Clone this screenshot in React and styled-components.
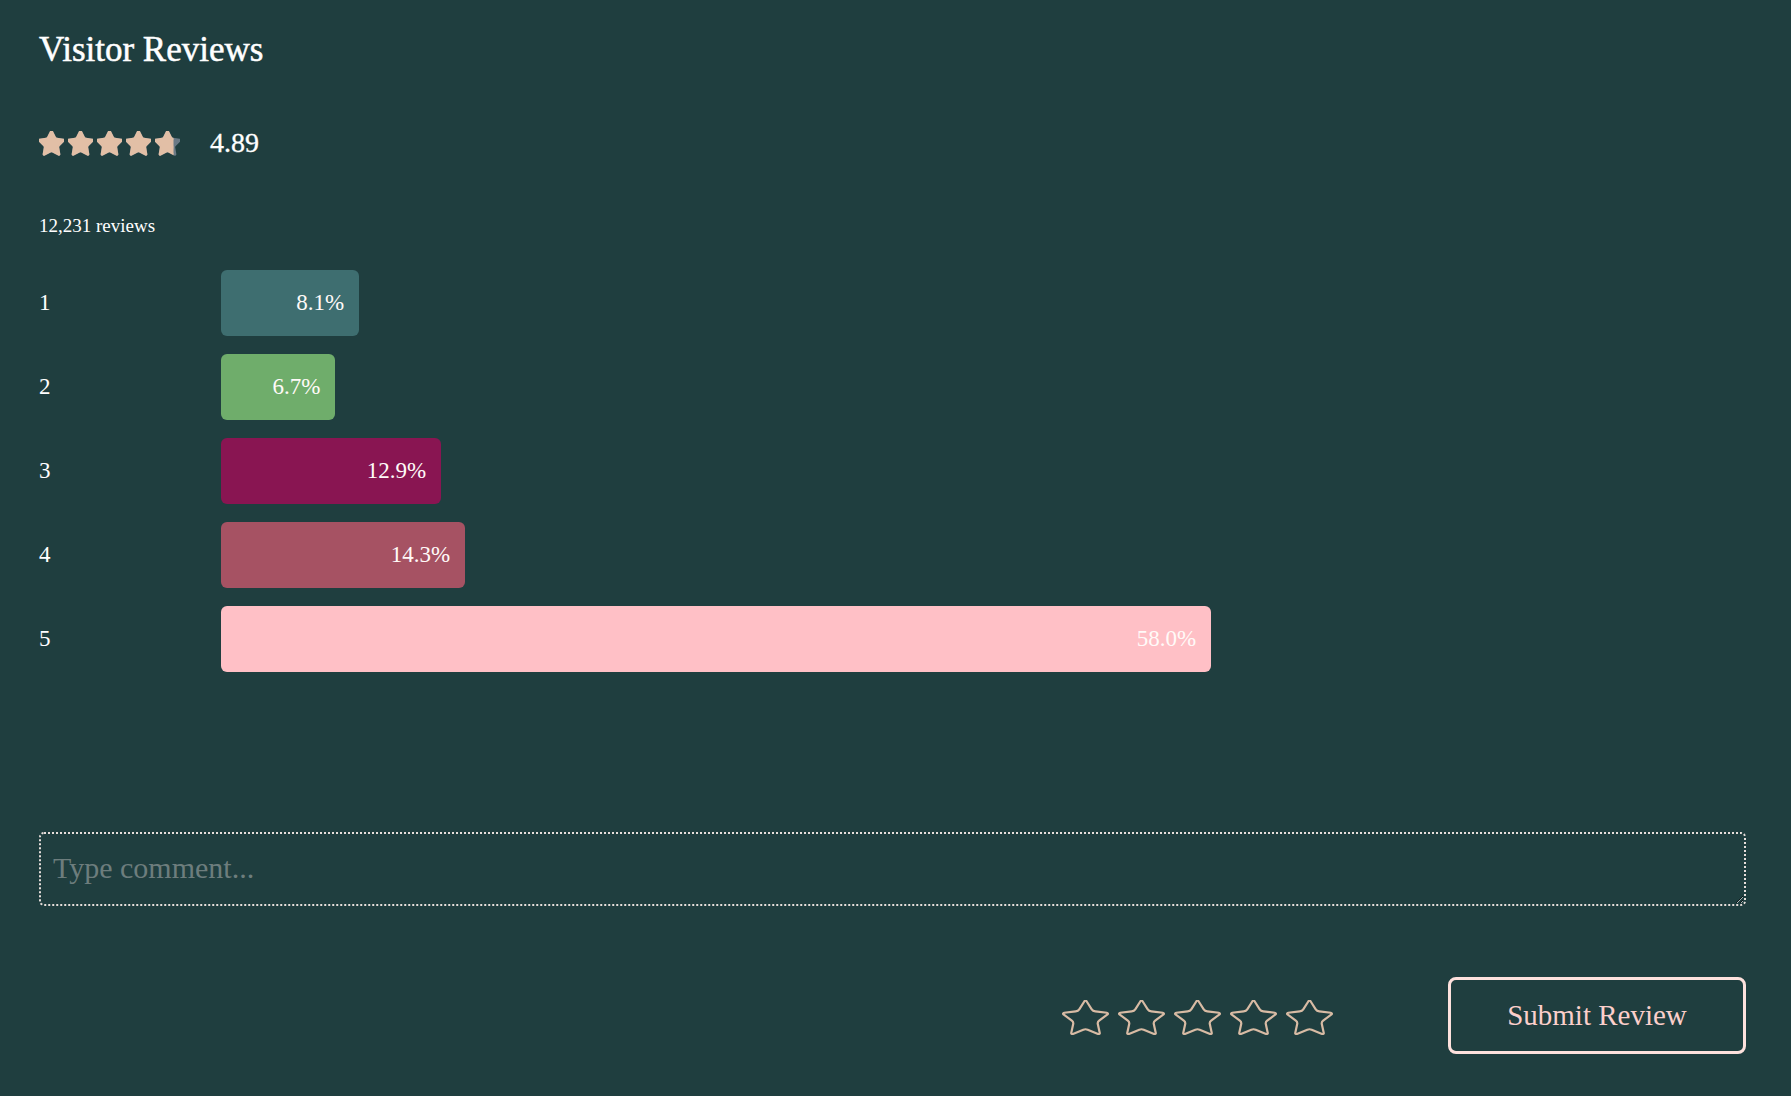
import React from 'react'
import styled, { createGlobalStyle } from 'styled-components'

const GlobalStyle = createGlobalStyle`
    * { box-sizing: border-box; }
    html, body {
        margin: 0;
        padding: 0;
        background: #1f3e3f;
    }
    body {
        font-family: "Liberation Serif", "DejaVu Serif", serif;
        color: #ffffff;
    }
`;

const ratings = [
    { label: '1', pct: 8.1, color: '#3e6e70' },
    { label: '2', pct: 6.7, color: '#6fad6b' },
    { label: '3', pct: 12.9, color: '#891552' },
    { label: '4', pct: 14.3, color: '#a65263' },
    { label: '5', pct: 58.0, color: '#ffc0c6' },
]

const STAR = 'M11.525 2.295a.53.53 0 0 1 .95 0l2.31 4.679a2.123 2.123 0 0 0 1.595 1.16l5.166.756a.53.53 0 0 1 .294.904l-3.736 3.638a2.123 2.123 0 0 0-.611 1.878l.882 5.14a.53.53 0 0 1-.771.56l-4.618-2.428a2.122 2.122 0 0 0-1.973 0L6.396 21.01a.53.53 0 0 1-.77-.56l.881-5.139a2.122 2.122 0 0 0-.611-1.879L2.16 9.795a.53.53 0 0 1 .294-.906l5.165-.755a2.122 2.122 0 0 0 1.597-1.16z'

function SolidStar({ fill = 1, id }) {
    return (
        <svg width="25" height="25" viewBox="2 2 20 20">
            <defs>
                <clipPath id={id}>
                    <rect x="2" y="2" width={20 * fill} height="20" />
                </clipPath>
            </defs>
            <path d={STAR} fill="#6b7a86" stroke="#6b7a86" strokeWidth="1.4" strokeLinejoin="round" />
            <path d={STAR} fill="#e2bfa6" stroke="#e2bfa6" strokeWidth="1.4" strokeLinejoin="round" clipPath={`url(#${id})`} />
        </svg>
    )
}

function OutlineStar() {
    return (
        <svg width="47" height="35" viewBox="1.5 1.6 21 20" preserveAspectRatio="none">
            <path d={STAR} fill="none" stroke="#d8bba4" strokeWidth="2.2" strokeLinejoin="round" vectorEffect="non-scaling-stroke" />
        </svg>
    )
}

function App() {
    return (
        <>
            <GlobalStyle />
            <Page>
                <Title>Visitor Reviews</Title>
                <Summary>
                    <StarRow>
                        {[1, 1, 1, 1, 0.74].map((f, i) => (
                            <SolidStar key={i} fill={f} id={`clip-${i}`} />
                        ))}
                    </StarRow>
                    <Score>4.89</Score>
                </Summary>
                <Count>12,231 reviews</Count>
                <Bars>
                    {ratings.map((r) => (
                        <BarRow key={r.label}>
                            <BarLabel>{r.label}</BarLabel>
                            <Bar $color={r.color} style={{ width: `${r.pct}%` }}>
                                {r.pct.toFixed(1)}%
                            </Bar>
                        </BarRow>
                    ))}
                </Bars>
                <Comment placeholder="Type comment..." />
                <Actions>
                    <PickStars>
                        {[0, 1, 2, 3, 4].map((i) => <OutlineStar key={i} />)}
                    </PickStars>
                    <SubmitButton>Submit Review</SubmitButton>
                </Actions>
            </Page>
        </>
    )
}

const Page = styled.div`
    display: flex;
    flex-direction: column;
    padding: 28px 45px 0 39px;
    min-height: 1096px;
`;

const Title = styled.h1`
    margin: 0;
    font-size: 35px;
    font-weight: normal;
    line-height: 44px;
    color: #ffffff;
    -webkit-text-stroke: 0.5px #ffffff;
`;

const Summary = styled.div`
    display: flex;
    align-items: center;
    gap: 30px;
    margin-top: 56px;
`;

const StarRow = styled.div`
    display: flex;
    gap: 4px;
    svg { display: block; }
`;

const Score = styled.span`
    font-size: 28px;
    line-height: 30px;
    color: #ffffff;
    -webkit-text-stroke: 0.3px #ffffff;
`;

const Count = styled.div`
    margin-top: 56px;
    font-size: 19px;
    line-height: 24px;
`;

const Bars = styled.div`
    display: flex;
    flex-direction: column;
    gap: 18px;
    margin-top: 32px;
`;

const BarRow = styled.div`
    display: flex;
    align-items: center;
    height: 66px;
`;

const BarLabel = styled.span`
    flex: 0 0 182px;
    font-size: 23px;
    color: #ffffff;
`;

const Bar = styled.div`
    flex-shrink: 0;
    height: 66px;
    display: flex;
    align-items: center;
    justify-content: flex-end;
    padding-right: 15px;
    border-radius: 6px;
    background: ${(p) => p.$color};
    font-size: 23px;
    color: #fffaf8;
`;

const Comment = styled.textarea`
    margin-top: 160px;
    width: 100%;
    height: 74px;
    padding: 17px 12px 10px;
    background: transparent;
    border: 2px dotted #e6dedb;
    border-radius: 5px;
    font-family: "Liberation Serif", "DejaVu Serif", serif;
    font-size: 30px;
    line-height: 34px;
    color: #ffffff;
    outline: none;
    resize: vertical;
    &::placeholder {
        color: #6d7d7d;
    }
`;

const Actions = styled.div`
    display: flex;
    align-items: center;
    justify-content: flex-end;
    gap: 115px;
    margin-top: 71px;
`;

const PickStars = styled.div`
    display: flex;
    gap: 9px;
    margin-top: 4px;
    svg { display: block; }
`;

const SubmitButton = styled.button`
    width: 298px;
    height: 77px;
    background: transparent;
    border: 3px solid #fde1dd;
    border-radius: 8px;
    font-family: "Liberation Serif", "DejaVu Serif", serif;
    font-size: 29px;
    color: #fbcfcb;
    cursor: pointer;
`;

export default App
